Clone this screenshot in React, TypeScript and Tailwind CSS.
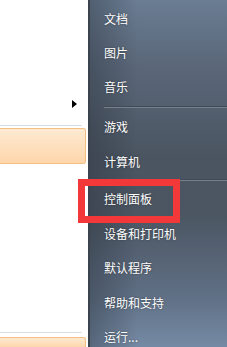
import React from 'react';

const topItems = ['文档', '图片', '音乐'];
const midItems = ['游戏', '计算机'];
const bottomItems = ['控制面板', '设备和打印机', '默认程序', '帮助和支持', '运行...'];

function Item({ label, h }: { label: string; h: string }) {
  return (
    <div className={`flex shrink-0 items-center pl-[14px] text-[12px] text-white [text-shadow:0_0_2px_rgba(0,0,0,0.45)] ${h}`}>
      {label}
    </div>
  );
}

function Separator() {
  return (
    <div className="ml-[14px] flex shrink-0 flex-col">
      <div className="h-px bg-[#414a55]" />
      <div className="h-px bg-[#75808c]" />
    </div>
  );
}

export default function App() {
  return (
    <div
      className="relative flex h-[347px] w-[227px] overflow-hidden"
      style={{ fontFamily: '"Noto Sans CJK SC", "Microsoft YaHei", sans-serif' }}
    >
      {/* left column (programs list) */}
      <div className="flex w-[88px] flex-col bg-white">
        <div className="ml-[72px] mt-[100px] h-0 w-0 shrink-0 border-y-[4px] border-l-[5px] border-y-transparent border-l-black" />
        <div className="mt-[17px] h-px w-[82px] shrink-0 bg-[#d6e0ec]" />
        <div className="mt-[2px] h-[36px] w-[86px] shrink-0 rounded-r-[3px] border-y border-r border-[#f3bd84] bg-[linear-gradient(to_bottom,#feead2,#fdd6aa)]" />
        <div className="flex-1" />
        <div className="h-px w-[82px] shrink-0 bg-[#d6e0ec]" />
        <div className="mt-[4px] h-[10px] w-[86px] shrink-0 rounded-tr-[3px] border-t border-r border-[#f3bd84] bg-[linear-gradient(to_bottom,#feead2,#fdd6aa)]" />
      </div>

      <div className="w-[2px] bg-[#3a434e]" />

      {/* right column */}
      <div className="flex flex-1 flex-col bg-[linear-gradient(to_right,rgba(35,42,52,0.35)_0%,rgba(35,42,52,0)_35%),linear-gradient(to_bottom,#6a7d93_0%,#5b687a_18%,#4b5562_45%,#4c5663_62%,#5f6f84_85%,#758aa4_100%)] pt-[2px]">
        {topItems.map((t) => (
          <Item key={t} label={t} h="h-[34px]" />
        ))}
        <div className="h-[2px] shrink-0" />
        <Separator />
        <div className="h-[2px] shrink-0" />
        {midItems.map((t) => (
          <Item key={t} label={t} h="h-[34.5px]" />
        ))}
        <Separator />
        <div className="h-px shrink-0" />
        {bottomItems.map((t) => (
          <Item key={t} label={t} h="h-[34.5px]" />
        ))}
      </div>

      {/* red highlight annotation */}
      <div className="absolute left-[78px] top-[179px] h-[44px] w-[102px] border-[7px] border-[#f23838]" />
    </div>
  );
}
